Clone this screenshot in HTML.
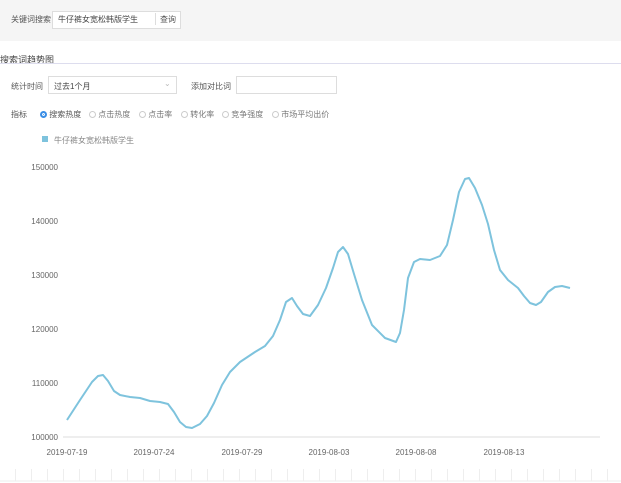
<!DOCTYPE html>
<html><head><meta charset="utf-8"><style>
*{margin:0;padding:0;box-sizing:border-box}
body{width:621px;height:483px;overflow:hidden;background:#fff;font-family:"Liberation Sans","Noto Sans CJK SC",sans-serif;font-size:8px;color:#555;position:relative}
.top{position:absolute;left:0;top:0;width:621px;height:41px;background:#f5f5f5}
.abs{position:absolute;white-space:nowrap}
.box{position:absolute;border:1px solid #ddd;background:#fff}
</style></head><body>
<div class="top"></div>
<div class="abs" style="left:11px;top:14px">关键词搜索</div>
<div class="box" style="left:52px;top:11px;width:129px;height:18px"></div>
<div class="abs" style="left:58px;top:14px;color:#444">牛仔裤女宽松韩版学生</div>
<div class="abs" style="left:155px;top:13px;width:1px;height:12px;background:#ddd"></div>
<div class="abs" style="left:160px;top:14px">查询</div>
<div class="abs" style="left:0;top:53px;font-size:9px;color:#444">搜索词趋势图</div>
<div class="abs" style="left:0;top:63px;width:621px;height:1px;background:#dde"></div>
<div class="abs" style="left:11px;top:81px">统计时间</div>
<div class="box" style="left:48px;top:76px;width:129px;height:18px"></div>
<div class="abs" style="left:54px;top:81px;color:#444">过去1个月</div>
<div class="abs" style="left:164px;top:79px;color:#bbb">&#8964;</div>
<div class="abs" style="left:191px;top:81px">添加对比词</div>
<div class="box" style="left:236px;top:76px;width:101px;height:18px"></div>
<div class="abs" style="left:11px;top:109px">指标</div>
<div class="abs" style="left:40px;top:109px"><span style="display:inline-block;width:7px;height:7px;border-radius:50%;border:2px solid #3a8ee6;background:#3a8ee6;box-shadow:inset 0 0 0 1px #fff;vertical-align:-1px"></span> 搜索热度</div>
<div class="abs" style="left:89px;top:109px;color:#777"><span style="display:inline-block;width:7px;height:7px;border-radius:50%;border:1px solid #ccc;vertical-align:-1px"></span> 点击热度</div>
<div class="abs" style="left:139px;top:109px;color:#777"><span style="display:inline-block;width:7px;height:7px;border-radius:50%;border:1px solid #ccc;vertical-align:-1px"></span> 点击率</div>
<div class="abs" style="left:181px;top:109px;color:#777"><span style="display:inline-block;width:7px;height:7px;border-radius:50%;border:1px solid #ccc;vertical-align:-1px"></span> 转化率</div>
<div class="abs" style="left:222px;top:109px;color:#777"><span style="display:inline-block;width:7px;height:7px;border-radius:50%;border:1px solid #ccc;vertical-align:-1px"></span> 竞争强度</div>
<div class="abs" style="left:272px;top:109px;color:#777"><span style="display:inline-block;width:7px;height:7px;border-radius:50%;border:1px solid #ccc;vertical-align:-1px"></span> 市场平均出价</div>
<div class="abs" style="left:42px;top:136px;width:6px;height:6px;background:#7ec3dd"></div>
<div class="abs" style="left:54px;top:135px;color:#888">牛仔裤女宽松韩版学生</div>
<div class="abs" style="left:0;top:469px;width:621px;height:12px;background:repeating-linear-gradient(90deg,transparent 0 15px,#eee 15px 16px)"></div>
<svg class="abs" style="left:0;top:150px" width="621" height="333" viewBox="0 150 621 333">
<g font-size="8" fill="#666" font-family="Liberation Sans,sans-serif" text-anchor="end">
<text x="58" y="170">150000</text><text x="58" y="224">140000</text><text x="58" y="278">130000</text><text x="58" y="332">120000</text><text x="58" y="386">110000</text><text x="58" y="440">100000</text>
</g>
<line x1="63" y1="437" x2="600" y2="437" stroke="#ddd"/>
<g font-size="8" fill="#666" font-family="Liberation Sans,sans-serif" text-anchor="middle">
<text x="67" y="455">2019-07-19</text><text x="154" y="455">2019-07-24</text><text x="242" y="455">2019-07-29</text><text x="329" y="455">2019-08-03</text><text x="416" y="455">2019-08-08</text><text x="504" y="455">2019-08-13</text>
</g>
<line x1="0" y1="481" x2="621" y2="481" stroke="#eee"/>
<polyline fill="none" stroke="#7ec3dd" stroke-width="2" stroke-linejoin="round" points="67,420 80,400 92,382 98,376 103,375 108,381 114,391 120,395 130,397 140,398 150,401 160,402 168,404 174,412 180,422 186,427 192,428 200,424 207,416 214,403 222,385 230,372 240,362 255,352 265,346 273,336 280,320 286,302 292,298 297,306 303,314 310,316 318,305 326,288 333,268 338,252 343,247 348,254 354,274 362,300 372,325 385,338 396,342 400,333 404,310 408,278 414,262 420,259 430,260 440,256 447,245 453,220 459,192 465,179 469,178 475,188 482,205 488,224 494,250 500,270 508,280 518,288 524,296 530,303 536,305 541,302 548,292 555,287 562,286 570,288"/>
</svg>
</body></html>
